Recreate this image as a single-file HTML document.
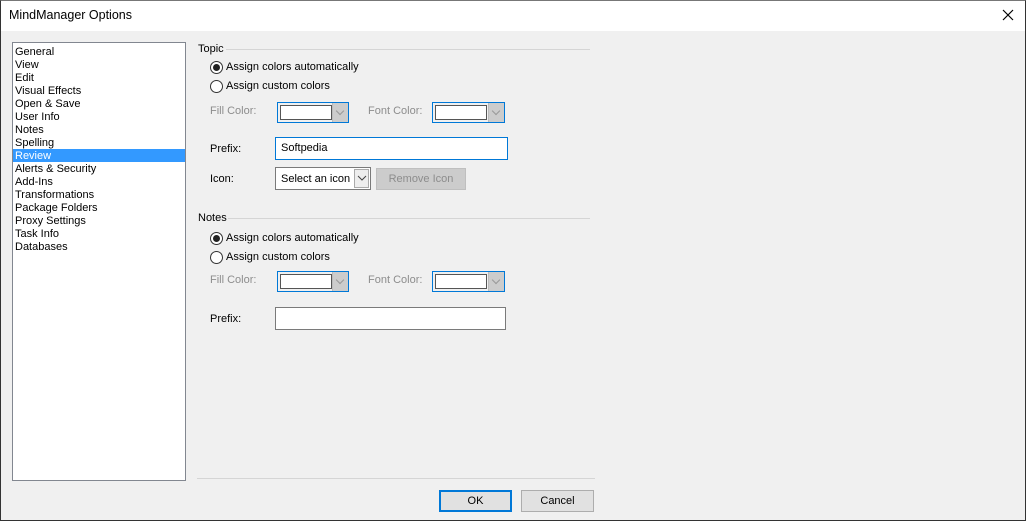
<!DOCTYPE html>
<html><head><style>
*{margin:0;padding:0;box-sizing:border-box}
body{width:1026px;height:521px;background:#f0f0f0;font-family:"Liberation Sans",sans-serif;font-size:11px;line-height:15px;color:#000;position:relative;overflow:hidden}
.a{position:absolute}
.win{position:absolute;left:0;top:0;width:1026px;height:521px;border:1px solid #333;border-top-color:#777}
.title{position:absolute;left:1px;top:1px;width:1024px;height:30px;background:#fff}
.list{left:12px;top:42px;width:174px;height:439px;background:#fff;border:1px solid #828790}
.list div{height:13px;line-height:14px;padding-left:2px;font-size:11px}
.sel{background:#3399ff;color:#fff}
.radio{width:13px;height:13px;border:1px solid #333;border-radius:50%;background:#fff}
.radio.on::after{content:"";position:absolute;left:2px;top:2px;width:7px;height:7px;border-radius:50%;background:#222}
.gray{color:#8d8d8d}
.combo{height:21px;border:1px solid #0078d7;background:#f0f0f0}
.combo .sw{position:absolute;left:2px;top:2px;width:52px;height:15px;border:1px solid #555;background:#fff}
.combo .ar{position:absolute;right:0;top:0;width:16px;height:19px;background:#ccc;border-left:1px solid #bbb}
.combo .ar::after{content:"";position:absolute;left:4px;top:5px;width:5px;height:5px;border-right:1px solid #999;border-bottom:1px solid #999;transform:rotate(45deg)}
.line{height:1px;background:#d5d5d5}
.btn{height:22px;border:1px solid #adadad;background:#e1e1e1;text-align:center;line-height:20px}
</style></head><body>
<div class="title"></div>
<div class="a" style="left:9px;top:8px;font-size:12.5px">MindManager Options</div>
<svg class="a" style="left:1002px;top:9px" width="12" height="12"><path d="M1 1L11 11M11 1L1 11" stroke="#000" stroke-width="1.2"/></svg>
<div class="a list">
<div style="margin-top:2px">General</div><div>View</div><div>Edit</div><div>Visual Effects</div><div>Open &amp; Save</div><div>User Info</div><div>Notes</div><div>Spelling</div><div class="sel">Review</div><div>Alerts &amp; Security</div><div>Add-Ins</div><div>Transformations</div><div>Package Folders</div><div>Proxy Settings</div><div>Task Info</div><div>Databases</div>
</div>

<div class="a" style="left:198px;top:42px">Topic</div>
<div class="a line" style="left:226px;top:49px;width:364px"></div>
<div class="a radio on" style="left:210px;top:61px"></div><div class="a" style="left:226px;top:60px">Assign colors automatically</div>
<div class="a radio" style="left:210px;top:80px"></div><div class="a" style="left:226px;top:79px">Assign custom colors</div>
<div class="a gray" style="left:210px;top:104px">Fill Color:</div>
<div class="a combo" style="left:277px;top:102px;width:72px"><div class="sw"></div><div class="ar"></div></div>
<div class="a gray" style="left:368px;top:104px">Font Color:</div>
<div class="a combo" style="left:432px;top:102px;width:73px"><div class="sw"></div><div class="ar"></div></div>
<div class="a" style="left:210px;top:142px">Prefix:</div>
<div class="a" style="left:275px;top:137px;width:233px;height:23px;border:1px solid #0078d7;background:#fff;padding:3px 0 0 5px">Softpedia</div>
<div class="a" style="left:210px;top:172px">Icon:</div>
<div class="a" style="left:275px;top:167px;width:96px;height:23px;border:1px solid #7a7a7a;background:#fff;padding:4px 0 0 5px">Select an icon</div>
<div class="a" style="left:354px;top:169px;width:15px;height:19px;border:1px solid #aaa;background:#eee"></div>
<svg class="a" style="left:357px;top:175px" width="10" height="6"><path d="M1 1L5 5L9 1" stroke="#444" fill="none"/></svg>
<div class="a btn gray" style="left:376px;top:168px;width:90px;background:#ccc;border-color:#bfbfbf">Remove Icon</div>

<div class="a" style="left:198px;top:211px">Notes</div>
<div class="a line" style="left:228px;top:218px;width:362px"></div>
<div class="a radio on" style="left:210px;top:232px"></div><div class="a" style="left:226px;top:231px">Assign colors automatically</div>
<div class="a radio" style="left:210px;top:251px"></div><div class="a" style="left:226px;top:250px">Assign custom colors</div>
<div class="a gray" style="left:210px;top:273px">Fill Color:</div>
<div class="a combo" style="left:277px;top:271px;width:72px"><div class="sw"></div><div class="ar"></div></div>
<div class="a gray" style="left:368px;top:273px">Font Color:</div>
<div class="a combo" style="left:432px;top:271px;width:73px"><div class="sw"></div><div class="ar"></div></div>
<div class="a" style="left:210px;top:312px">Prefix:</div>
<div class="a" style="left:275px;top:307px;width:231px;height:23px;border:1px solid #7a7a7a;background:#fff"></div>

<div class="a line" style="left:197px;top:478px;width:398px"></div>
<div class="a btn" style="left:439px;top:490px;width:73px;border:2px solid #0078d7;line-height:18px">OK</div>
<div class="a btn" style="left:521px;top:490px;width:73px">Cancel</div>
<div class="win"></div>
</body></html>
